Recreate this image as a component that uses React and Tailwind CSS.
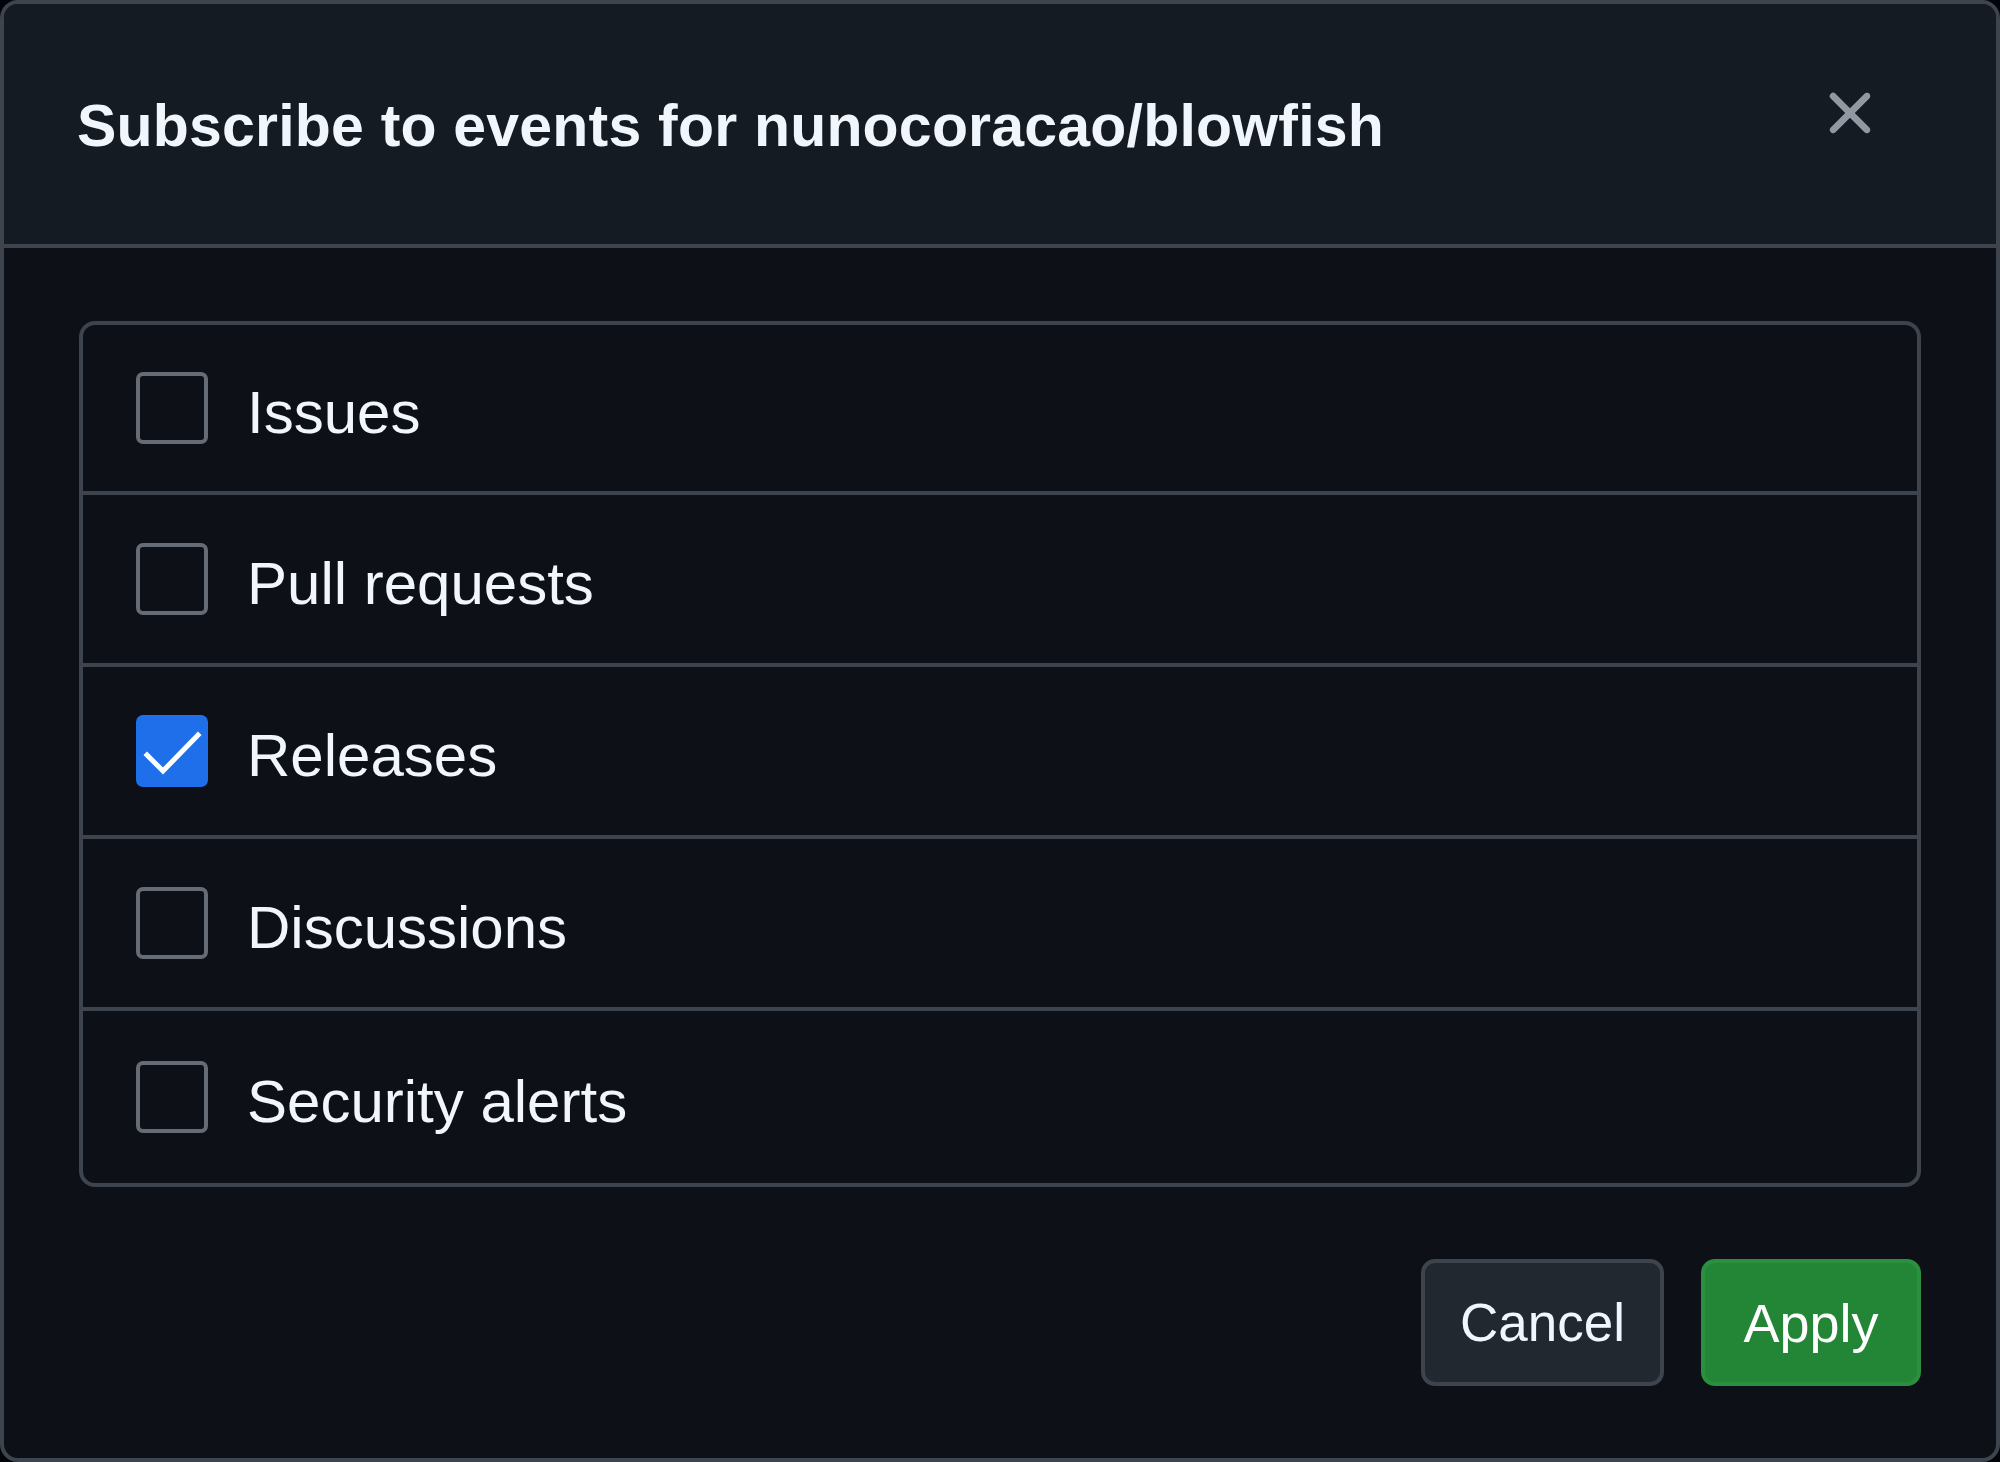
import React from "react";

const items = [
  { label: "Issues", checked: false },
  { label: "Pull requests", checked: false },
  { label: "Releases", checked: true },
  { label: "Discussions", checked: false },
  { label: "Security alerts", checked: false },
];

function Checkbox({ checked }) {
  if (checked) {
    return (
      <div className="w-[72px] h-[72px] rounded-[7px] bg-[#1f6feb] flex items-center justify-center shrink-0">
        <svg width="72" height="72" viewBox="0 0 72 72" fill="none">
          <path d="M11 40 L27 56 L62 20" stroke="#ffffff" strokeWidth="5" strokeLinecap="square" strokeLinejoin="miter" />
        </svg>
      </div>
    );
  }
  return <div className="w-[72px] h-[72px] rounded-[7px] border-4 border-[#656c76] bg-[#0d1117] shrink-0" />;
}

export default function App() {
  return (
    <div className="w-[2000px] h-[1462px] bg-[#010409]" style={{ fontFamily: '"Liberation Sans", Arial, sans-serif' }}>
      <div className="w-full h-full border-4 border-[#3d444d] rounded-[18px] bg-[#0d1117] overflow-hidden flex flex-col">
        <div className="h-[244px] shrink-0 bg-[#151b23] border-b-4 border-[#3d444d] flex items-center justify-between pl-[73px] pr-[76px]">
          <h1 className="text-[59px] font-bold text-[#f0f6fc] leading-none mt-[5px] tracking-[0.2px]">
            Subscribe to events for nunocoracao/blowfish
          </h1>
          <button className="w-[140px] h-[140px] flex items-center justify-center mb-[22px] rounded-[14px]">
            <svg width="72" height="72" viewBox="0 0 16 16" fill="#9198a1">
              <path d="M3.72 3.72a.75.75 0 0 1 1.06 0L8 6.94l3.22-3.22a.749.749 0 0 1 1.275.326.749.749 0 0 1-.215.734L9.06 8l3.22 3.22a.749.749 0 0 1-.326 1.275.749.749 0 0 1-.734-.215L8 9.06l-3.22 3.22a.751.751 0 0 1-1.042-.018.751.751 0 0 1-.018-1.042L6.94 8 3.72 4.78a.75.75 0 0 1 0-1.06Z" />
            </svg>
          </button>
        </div>
        <div className="px-[75px] pt-[73px] flex flex-col">
          <div className="border-4 border-[#3d444d] rounded-[16px] flex flex-col divide-y-4 divide-[#3d444d]">
            {items.map((it) => (
              <div key={it.label} className="h-[172px] first:h-[170px] flex items-center pl-[53px] gap-[39px]">
                <Checkbox checked={it.checked} />
                <span className="text-[60px] text-[#f0f6fc] leading-none mt-[10px]">{it.label}</span>
              </div>
            ))}
          </div>
          <div className="mt-[72px] flex justify-end gap-[37px]">
            <button className="w-[243px] h-[127px] rounded-[14px] border-4 border-[#3d444d] bg-[#212830] text-[53px] text-[#f0f6fc] leading-none flex items-center justify-center">
              Cancel
            </button>
            <button className="w-[220px] h-[127px] rounded-[14px] bg-[#238636] border-4 border-[#2a8f3e] text-[54px] text-white leading-none flex items-center justify-center">
              Apply
            </button>
          </div>
        </div>
      </div>
    </div>
  );
}
